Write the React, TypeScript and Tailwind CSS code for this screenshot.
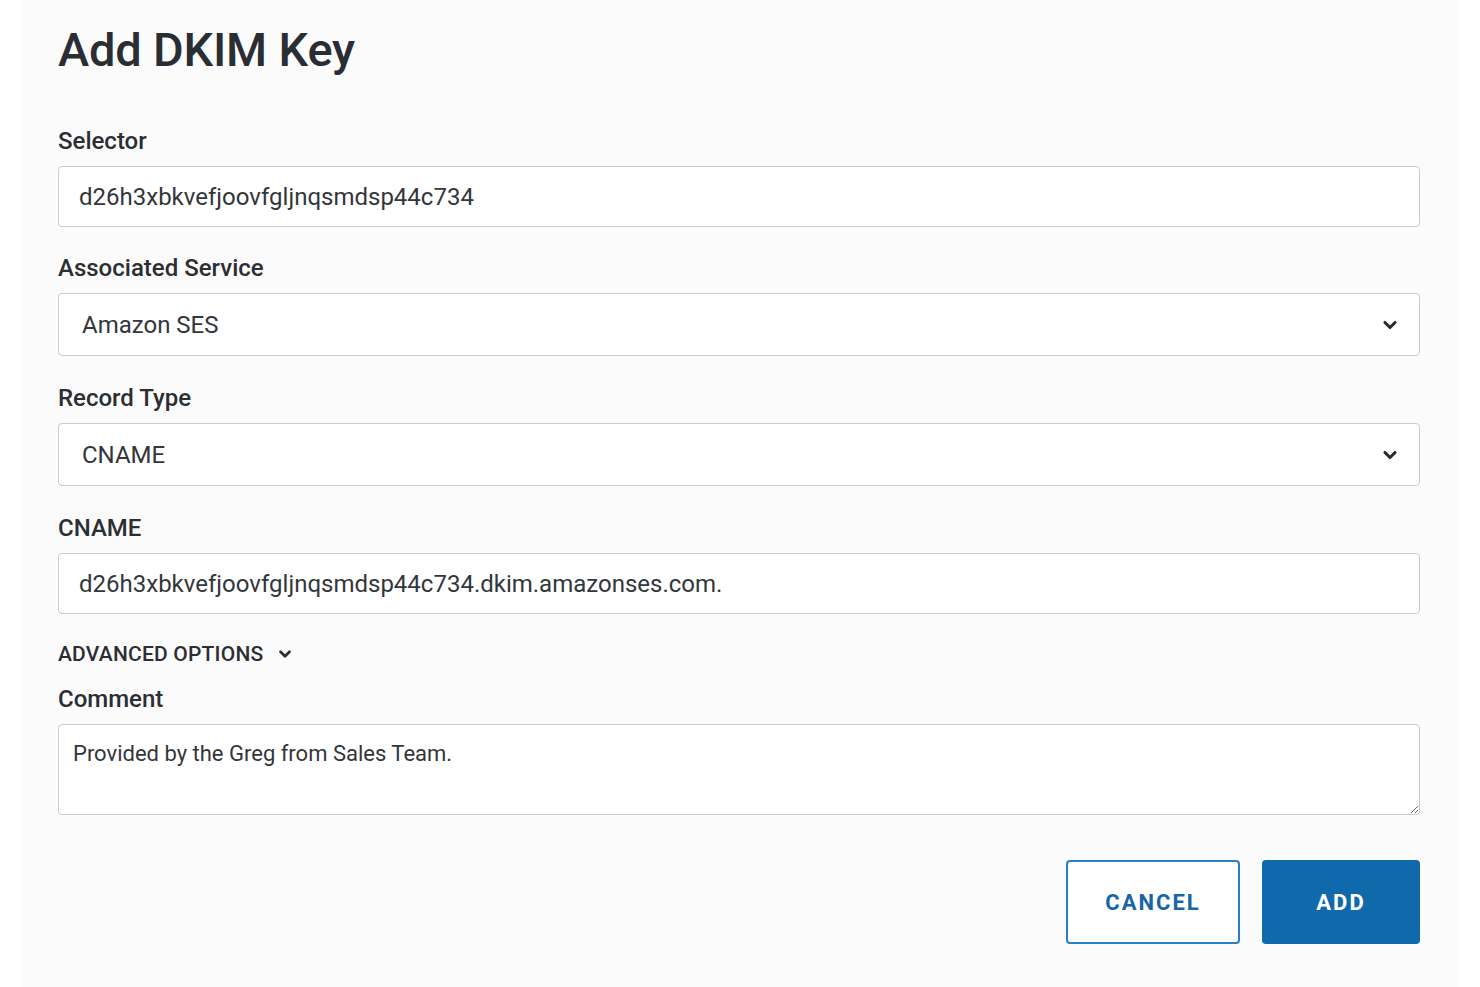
import React from "react";

const ChevronDown: React.FC<{ className?: string }> = ({ className }) => (
  <svg viewBox="0 0 16 16" className={className} fill="none" stroke="currentColor" strokeWidth={2.7} strokeLinecap="round" strokeLinejoin="round">
    <path d="M3.5 5.75 8 10.25l4.5-4.5" />
  </svg>
);

const Label: React.FC<{ children: React.ReactNode }> = ({ children }) => (
  <label className="block text-[24px] leading-[30px] font-medium text-[#2b2e33] mb-[10px]">{children}</label>
);

const TextField: React.FC<{ value: string }> = ({ value }) => (
  <input
    readOnly
    value={value}
    className="w-full h-[61px] rounded-[4px] border border-[#cacbcf] bg-white px-[20px] text-[24px] text-[#33363b] outline-none"
  />
);

const SelectField: React.FC<{ value: string }> = ({ value }) => (
  <div className="w-full h-[63px] rounded-[4px] border border-[#cacbcf] bg-white pl-[23px] pr-[20px] flex items-center justify-between">
    <span className="text-[24px] text-[#33363b]">{value}</span>
    <ChevronDown className="w-[18px] h-[18px] text-[#26292e]" />
  </div>
);

export default function App() {
  return (
    <div className="min-h-[987px] bg-white flex justify-center" style={{ fontFamily: "Roboto, 'Liberation Sans', sans-serif" }}>
      <div className="w-[1438px] min-h-[987px] bg-[#fbfbfb] pl-[37px] pr-[39px] pt-[22px]">
        <h1 className="text-[47px] leading-[56px] font-medium text-[#2a2d33] tracking-[-0.2px]">Add DKIM Key</h1>

        <div className="mt-[48px]">
          <Label>Selector</Label>
          <TextField value="d26h3xbkvefjoovfgljnqsmdsp44c734" />
        </div>

        <div className="mt-[26px]">
          <Label>Associated Service</Label>
          <SelectField value="Amazon SES" />
        </div>

        <div className="mt-[27px]">
          <Label>Record Type</Label>
          <SelectField value="CNAME" />
        </div>

        <div className="mt-[27px]">
          <Label>CNAME</Label>
          <TextField value="d26h3xbkvefjoovfgljnqsmdsp44c734.dkim.amazonses.com." />
        </div>

        <button className="mt-[27px] flex items-center gap-[14px] text-[21px] leading-[26px] font-medium text-[#2b2e33] tracking-[0.2px]">
          ADVANCED OPTIONS
          <ChevronDown className="w-[16px] h-[16px] text-[#2b2e33]" />
        </button>

        <div className="mt-[17px]">
          <Label>Comment</Label>
          <textarea
            defaultValue="Provided by the Greg from Sales Team."
            className="block w-full h-[91px] rounded-[4px] border border-[#cacbcf] bg-white px-[14px] pt-[16px] pb-[12px] text-[22px] leading-[26px] text-[#33363b] outline-none"
          />
        </div>

        <div className="mt-[45px] flex justify-end gap-[22px]">
          <button className="w-[174px] h-[84px] rounded-[4px] border-2 border-[#2b7fc3] bg-white text-[22px] font-bold tracking-[2px] text-[#1666a8]">
            CANCEL
          </button>
          <button className="w-[158px] h-[84px] rounded-[4px] bg-[#0f69aa] text-[22px] font-bold tracking-[2px] text-white">
            ADD
          </button>
        </div>
      </div>
    </div>
  );
}
